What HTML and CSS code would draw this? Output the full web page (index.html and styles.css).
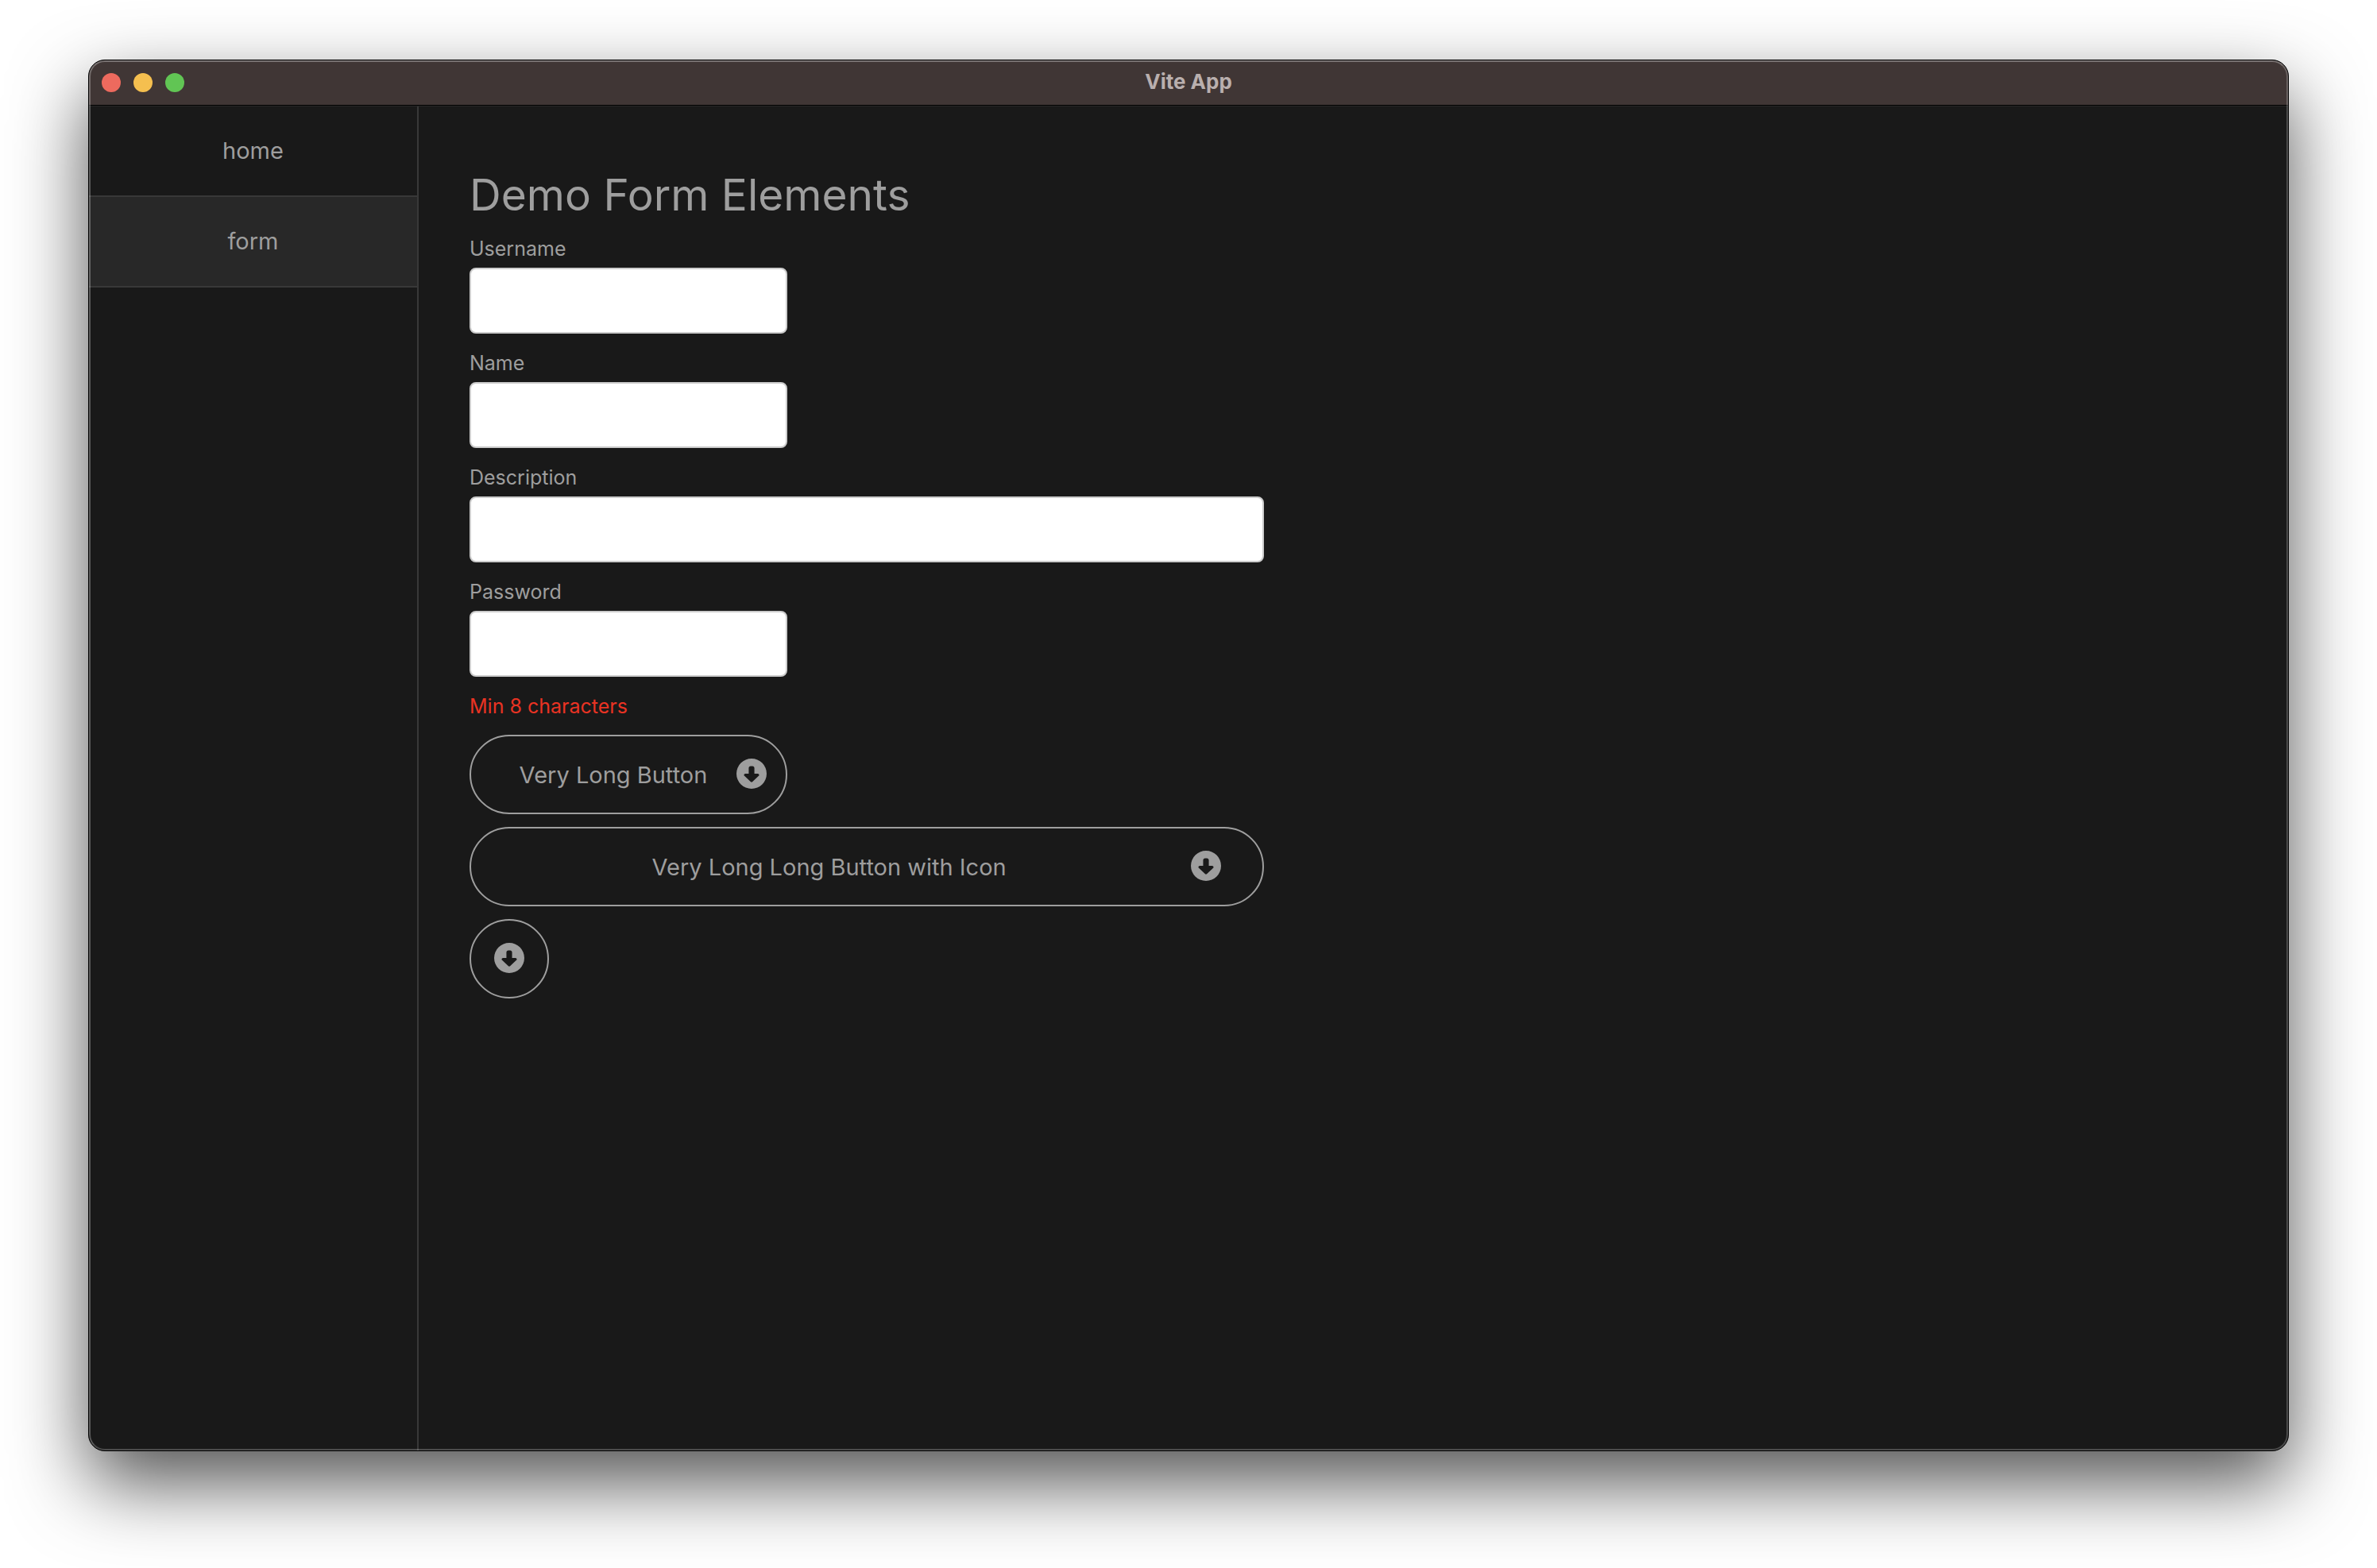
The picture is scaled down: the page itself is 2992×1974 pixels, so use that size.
FILE: index.html
```html
<!DOCTYPE html>
<html lang="en">
<head>
  <meta charset="utf-8">
  <meta name="viewport" content="width=device-width, initial-scale=1">
  <title>Vite App</title>
  <link rel="stylesheet" href="styles.css">
</head>
<body>
  <svg class="sprite" aria-hidden="true">
    <symbol id="circle-down" viewBox="0 0 512 512">
      <path d="M256 0a256 256 0 1 0 0 512A256 256 0 1 0 256 0zM376.900 294.600L269.800 394.500c-3.800 3.500-8.700 5.500-13.800 5.500s-10.100-2-13.800-5.500L135.100 294.600c-4.500-4.200-7.100-10.100-7.100-16.300c0-12.300 10-22.300 22.300-22.300l57.700 0 0-96c0-17.700 14.300-32 32-32l32 0c17.700 0 32 14.300 32 32l0 96 57.700 0c12.300 0 22.300 10 22.300 22.300c0 6.200-2.600 12.100-7.100 16.300z"/>
    </symbol>
  </svg>

  <div class="window">
    <header class="titlebar">
      <div class="lights">
        <button class="light light-close" type="button" aria-label="Close"></button>
        <button class="light light-minimize" type="button" aria-label="Minimize"></button>
        <button class="light light-zoom" type="button" aria-label="Zoom"></button>
      </div>
      <div class="title">Vite App</div>
    </header>

    <div class="app">
      <nav class="sidebar">
        <a class="nav-link" href="#home">home</a>
        <a class="nav-link active" href="#form" aria-current="page">form</a>
      </nav>

      <main class="content">
        <form class="form">
          <h1 class="heading">Demo Form Elements</h1>
          <div class="field">
            <label for="username">Username</label>
            <input id="username" type="text">
          </div>
          <div class="field">
            <label for="name">Name</label>
            <input id="name" type="text">
          </div>
          <div class="field wide">
            <label for="description">Description</label>
            <input id="description" type="text">
          </div>
          <div class="field">
            <label for="password">Password</label>
            <input id="password" type="password" aria-describedby="password-error">
          </div>
          <p class="error" id="password-error">Min 8 characters</p>
          <button class="button" type="button">
            <span>Very Long Button</span>
            <svg class="icon" aria-hidden="true"><use href="#circle-down"/></svg>
          </button>
          <button class="button wide" type="button">
            <span>Very Long Long Button with Icon</span>
            <svg class="icon" aria-hidden="true"><use href="#circle-down"/></svg>
          </button>
          <button class="button round" type="button" aria-label="Download">
            <svg class="icon" aria-hidden="true"><use href="#circle-down"/></svg>
          </button>
        </form>
      </main>
    </div>
  </div>
</body>
</html>
```

FILE: styles.css
```css
*,
*::before,
*::after {
  box-sizing: border-box;
}

body {
  display: flex;
  min-height: 100vh;
  margin: 0;
  padding: 75px 111px 147px;
  background: #fff;
  color: #9e9e9e;
  font-family: Inter, "Liberation Sans", sans-serif;
  font-size: 29px;
}

.sprite {
  display: none;
}

.window {
  position: relative;
  display: flex;
  flex: 1;
  flex-direction: column;
  min-width: 0;
  overflow: hidden;
  border: 1px solid #000;
  border-radius: 21px;
  background: #191919;
  box-shadow: 0 40px 96px rgba(0, 0, 0, 0.68);
}

/* Light rim drawn over the window's contents */
.window::after {
  content: "";
  position: absolute;
  inset: 0;
  border: 2px solid rgba(255, 255, 255, 0.22);
  border-top-color: rgba(255, 255, 255, 0.3);
  border-left-color: rgba(255, 255, 255, 0.28);
  border-radius: 20px;
  pointer-events: none;
}

.titlebar {
  display: grid;
  grid-template-columns: 1fr auto 1fr;
  align-items: center;
  height: 57px;
  padding: 0 16px;
  border-bottom: 1px solid #000;
  background: #403635;
}

.lights {
  display: flex;
  gap: 16px;
}

.light {
  width: 24px;
  height: 24px;
  padding: 0;
  border: 0;
  border-radius: 50%;
}

.light-close {
  background: #ed6a5e;
}

.light-minimize {
  background: #f5bf4f;
}

.light-zoom {
  background: #61c554;
}

.title {
  padding-bottom: 2px;
  color: #b9afae;
  font-size: 26px;
  font-weight: 700;
  line-height: 32px;
}

.app {
  display: flex;
  flex: 1;
  border-top: 1px solid #262626;
}

.sidebar {
  flex: 0 0 415px;
  border-right: 2px solid #383838;
}

.nav-link {
  display: block;
  padding: 36px 16px;
  border-bottom: 2px solid #383838;
  color: inherit;
  line-height: 40px;
  text-align: center;
  text-decoration: none;
}

.nav-link.active {
  background: #282828;
}

.content {
  flex: 1;
  min-width: 0;
  padding: 80px 64px;
}

.form {
  display: flex;
  flex-direction: column;
  gap: 16px;
}

.heading {
  margin: 0;
  font-size: 55px;
  font-weight: 400;
  line-height: 62px;
}

.field {
  display: flex;
  flex-direction: column;
  gap: 4px;
  max-width: 400px;
}

.field label,
.error {
  margin: 0;
  padding-top: 2px;
  font-size: 25px;
  line-height: 39px;
}

.field input {
  width: 100%;
  height: 83px;
  padding: 0 16px;
  border: 2px solid #ccc;
  border-radius: 8px;
  background: #fff;
  color: #191919;
  font: inherit;
}

.error {
  color: #e93323;
}

.button {
  display: grid;
  grid-template-columns: 9fr 1fr;
  align-items: center;
  justify-items: center;
  width: 100%;
  max-width: 400px;
  height: 100px;
  padding: 0 24px;
  border: 2px solid #9e9e9e;
  border-radius: 50px;
  background: transparent;
  color: inherit;
  font: inherit;
}

.field.wide,
.button.wide {
  max-width: 1000px;
}

.button.round {
  grid-template-columns: 1fr;
  width: 100px;
}

.icon {
  width: 38px;
  height: 38px;
  margin-bottom: 2px;
  fill: currentColor;
}
```
